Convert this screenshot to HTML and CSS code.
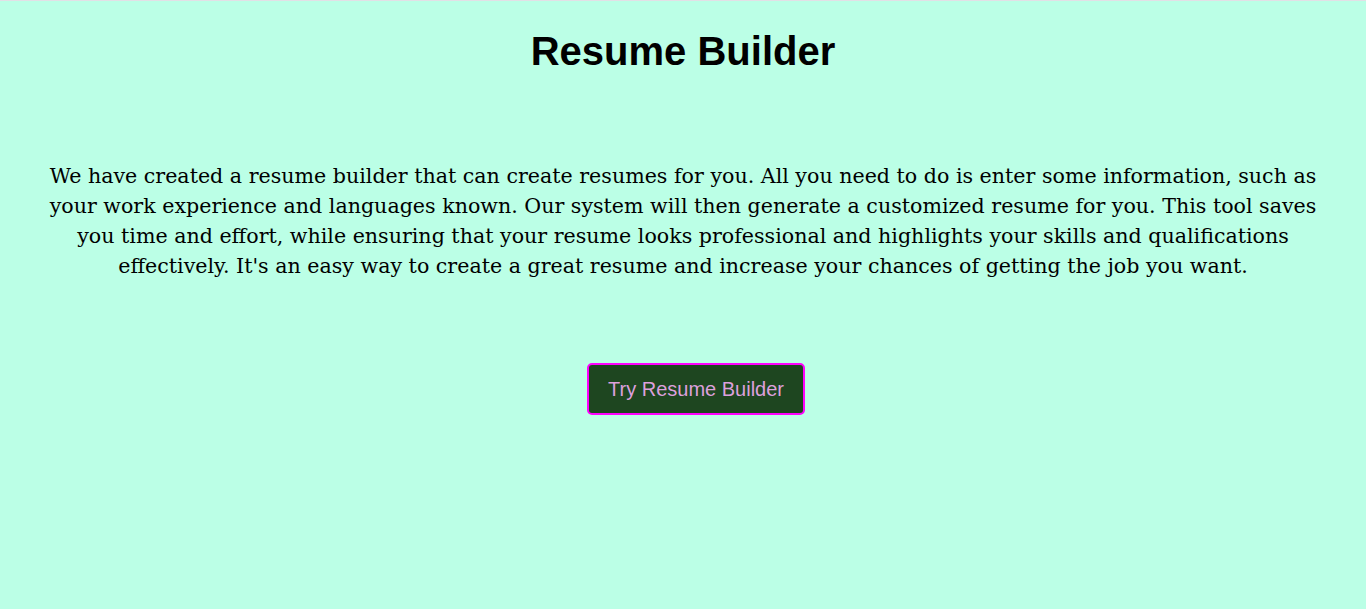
FILE: index.html
```html
<!DOCTYPE html>
<html lang="en">
<head>
<meta charset="utf-8">
<title>Resume Builder</title>
<link rel="stylesheet" href="styles.css">
</head>
<body>
<main class="page">
  <h1 class="title">Resume Builder</h1>
  <p class="intro">We have created a resume builder that can create resumes for you. All you need to do is enter some information, such as your work experience and languages known. Our system will then generate a customized resume for you. This tool saves you time and effort, while ensuring that your resume looks professional and highlights your skills and qualifications effectively. It's an easy way to create a great resume and increase your chances of getting the job you want.</p>
  <button class="cta" type="button">Try Resume Builder</button>
</main>
</body>
</html>
```

FILE: styles.css
```css
html, body {
  margin: 0;
  padding: 0;
}
body {
  background: #bbffe6;
  border-top: 1px solid #e2e0e6;
  min-height: 608px;
}
.page {
  display: flex;
  flex-direction: column;
  align-items: center;
  padding-top: 27px;
}
.title {
  margin: 0;
  font-family: "Liberation Sans", Arial, sans-serif;
  font-weight: bold;
  font-size: 40px;
  line-height: 46px;
  color: #000;
}
.intro {
  margin: 87px 0 0;
  width: 1290px;
  text-align: center;
  font-family: "DejaVu Serif", "Liberation Serif", serif;
  font-size: 20.6px;
  line-height: 30px;
  color: #000;
}
.cta {
  margin-top: 82px;
  margin-left: 26px;
  width: 218px;
  height: 52px;
  padding: 0;
  background: #1e4620;
  border: 2px solid #ff00ff;
  border-radius: 5px;
  color: #dda0dd;
  font-family: "Liberation Sans", Arial, sans-serif;
  font-size: 20px;
  line-height: 24px;
  cursor: pointer;
}
```
